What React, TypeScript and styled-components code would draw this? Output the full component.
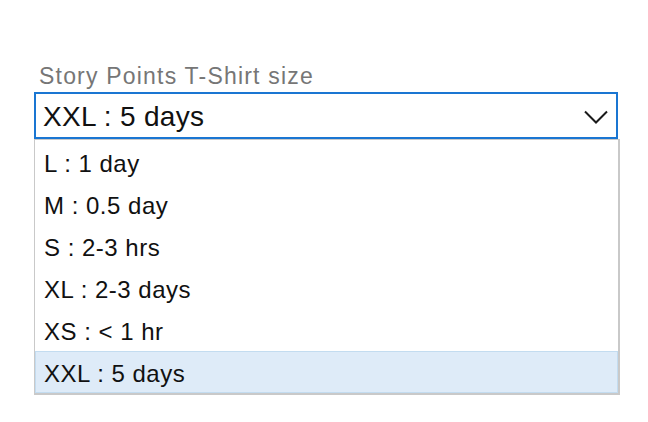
import styled, { createGlobalStyle } from 'styled-components';

const sizes = [
  'L : 1 day',
  'M : 0.5 day',
  'S : 2-3 hrs',
  'XL : 2-3 days',
  'XS : < 1 hr',
  'XXL : 5 days',
];

const GlobalStyle = createGlobalStyle`
  html, body {
    margin: 0;
    background: #ffffff;
    font-family: 'Liberation Sans', Arial, sans-serif;
  }
`;

const App = () => {
  const current = 'XXL : 5 days';

  return (
    <Page>
      <GlobalStyle />
      <Field>
        <Label>Story Points T-Shirt size</Label>
        <Select>
          <Value>{current}</Value>
          <svg width="24" height="14" viewBox="0 0 24 14">
            <path d="M1 1.5 L12 12.5 L23 1.5" fill="none" stroke="#1a1a1a" strokeWidth="2" />
          </svg>
        </Select>
        <List>
          {sizes.map((s) => (
            <Option key={s} selected={s === current}>
              {s}
            </Option>
          ))}
        </List>
      </Field>
    </Page>
  );
};

export default App;

const Page = styled.div`
  padding: 62px 0 0 34px;
`;

const Field = styled.div`
  width: 586px;
  display: flex;
  flex-direction: column;
`;

const Label = styled.div`
  color: #767676;
  font-size: 23px;
  letter-spacing: 1.2px;
  line-height: 28px;
  padding-left: 5px;
  height: 30px;
`;

const Select = styled.div`
  box-sizing: border-box;
  width: 584px;
  height: 47px;
  border: 2px solid #1a76d2;
  display: flex;
  align-items: center;
  justify-content: space-between;
  padding: 3px 8px 0 7px;
  color: #111;
  font-size: 28px;
  letter-spacing: 0.3px;
`;

const Value = styled.span``;

const List = styled.div`
  box-sizing: border-box;
  border: 1px solid #c9c9c9;
  border-right-width: 2px;
  border-bottom-width: 2px;
  padding: 1px 0 0 0;
`;

const Option = styled.div<{ selected?: boolean }>`
  box-sizing: border-box;
  height: 42px;
  display: flex;
  align-items: center;
  padding: 3px 0 0 8px;
  font-size: 24px;
  letter-spacing: 0.5px;
  color: #111;
  background: ${(p) => (p.selected ? '#deebf8' : 'transparent')};
  border: 1px solid ${(p) => (p.selected ? '#c3dcf0' : 'transparent')};
`;
